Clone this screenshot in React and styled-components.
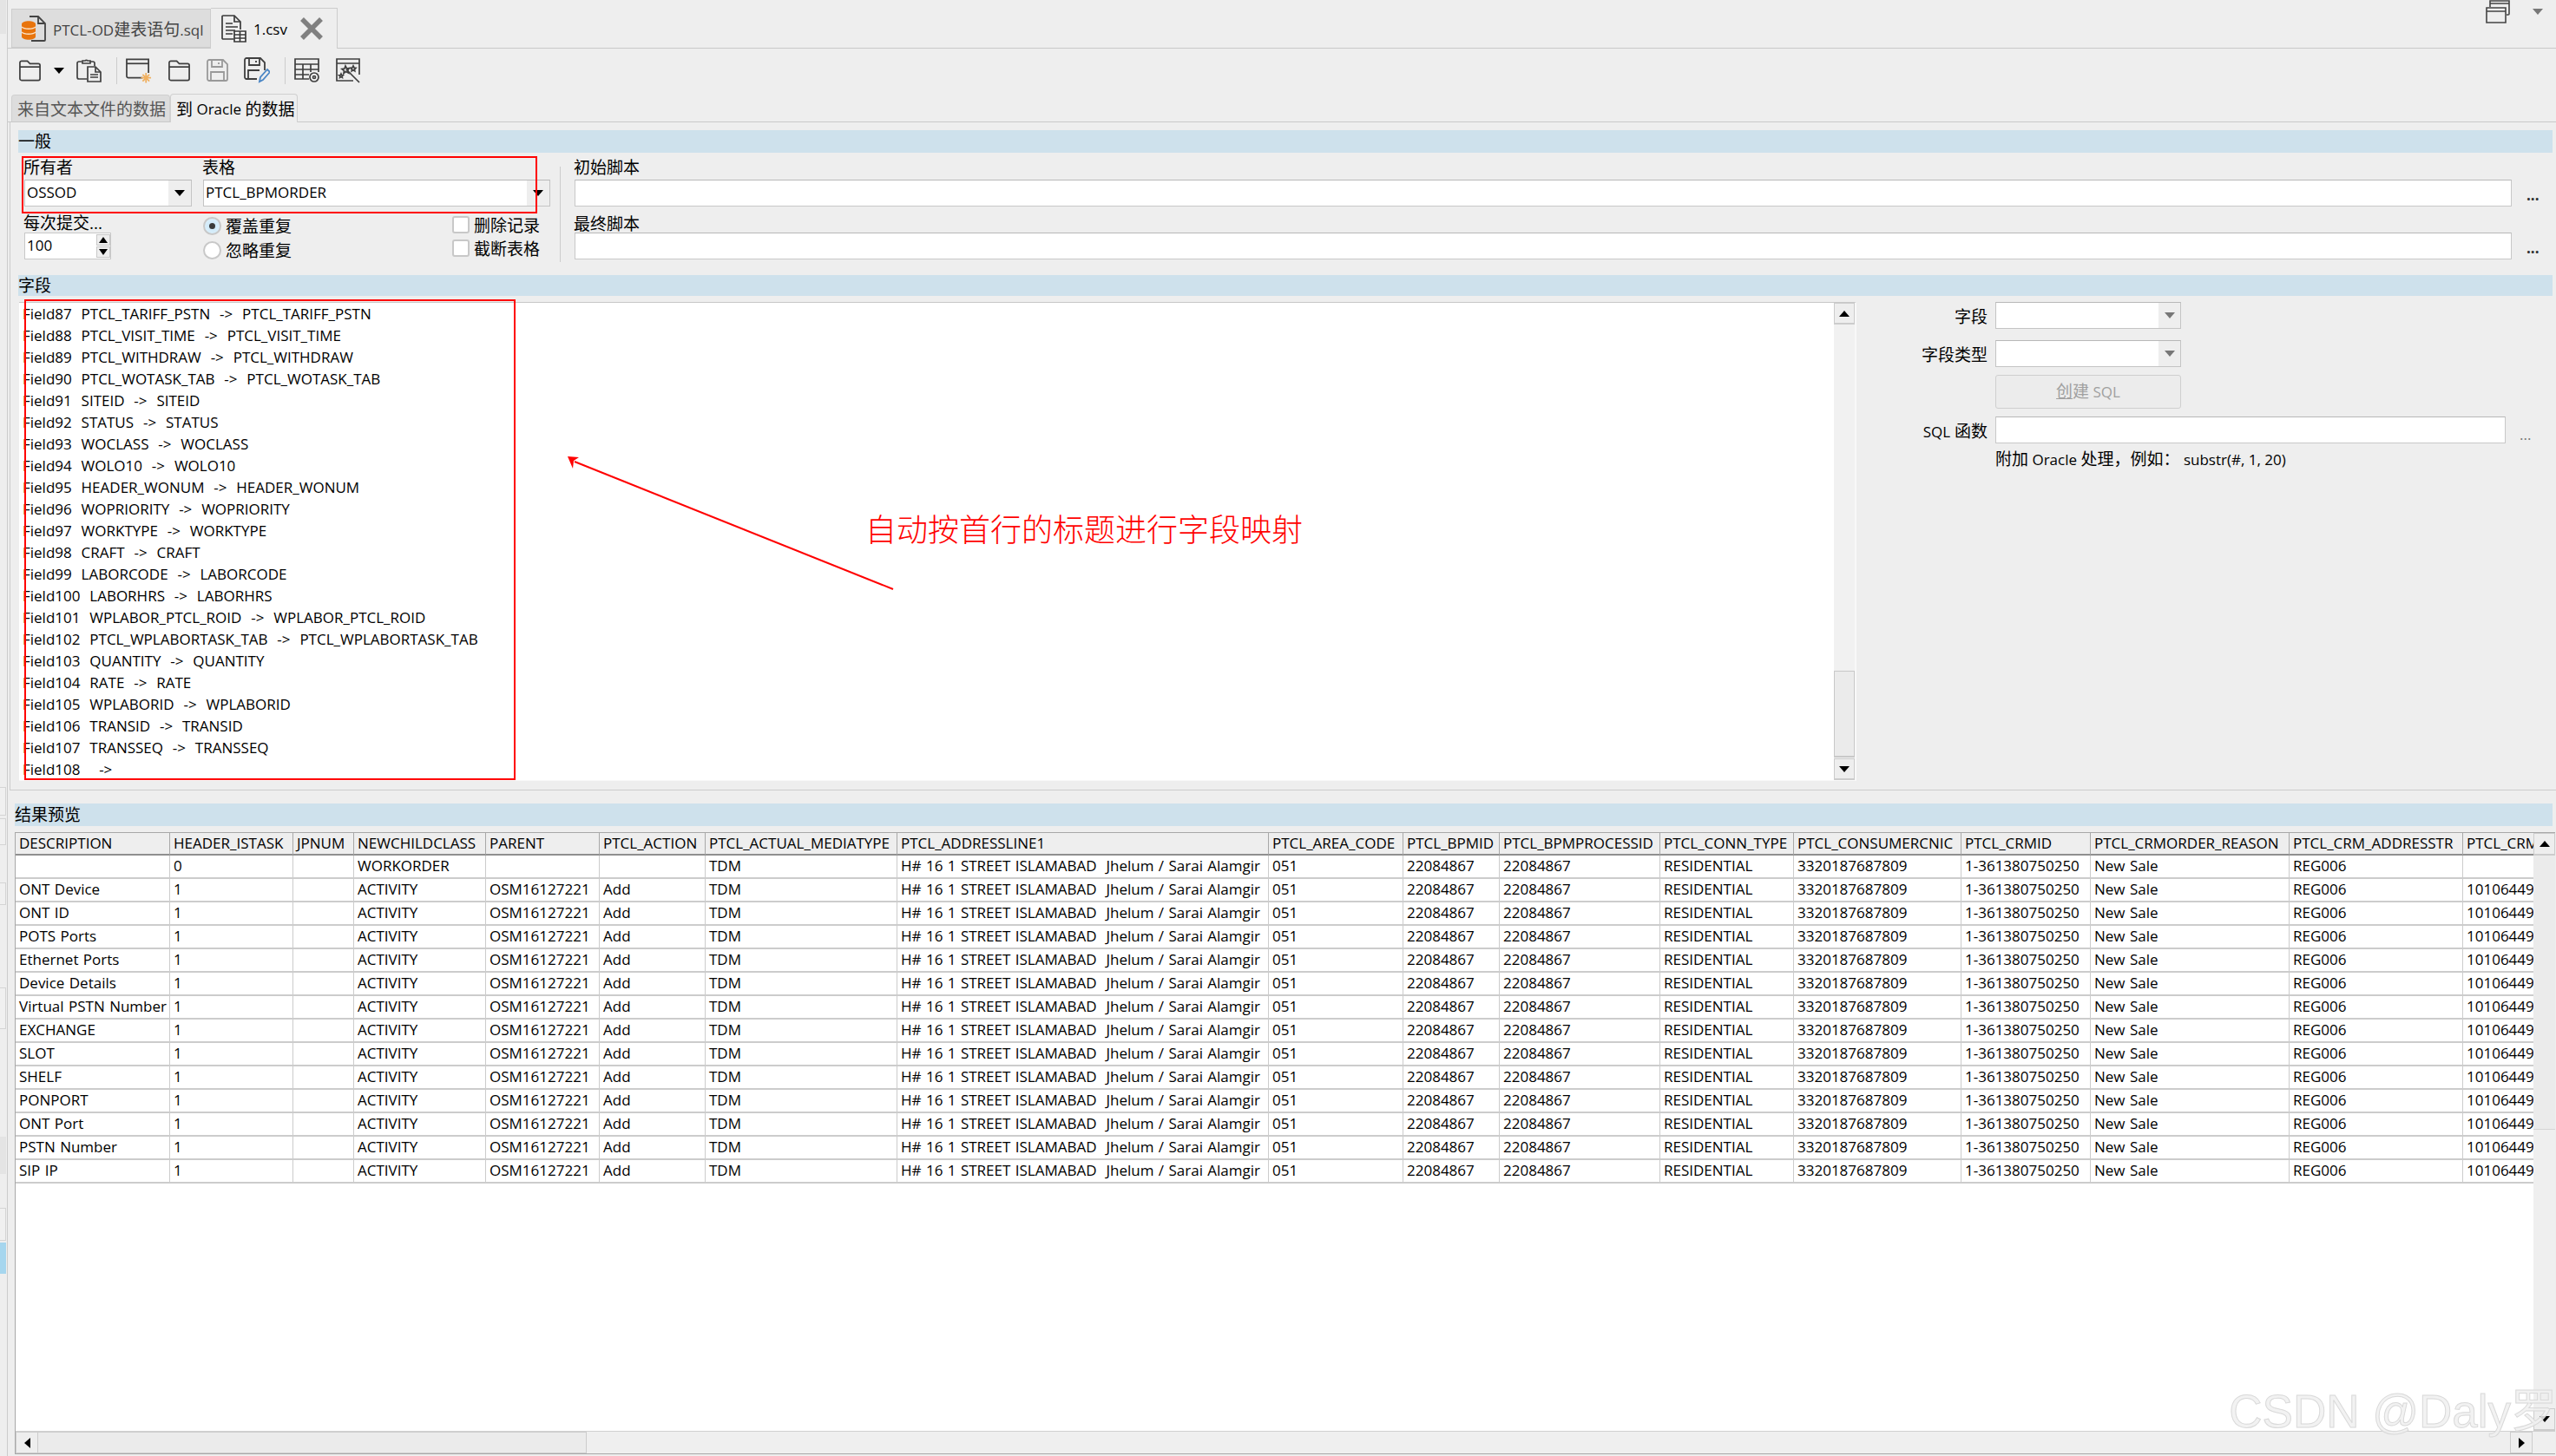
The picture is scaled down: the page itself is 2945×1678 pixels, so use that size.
import React from "react";
import styled, { createGlobalStyle } from "styled-components";

const COLUMNS = [
  ["DESCRIPTION", 178],
  ["HEADER_ISTASK", 142],
  ["JPNUM", 70],
  ["NEWCHILDCLASS", 152],
  ["PARENT", 131],
  ["PTCL_ACTION", 122],
  ["PTCL_ACTUAL_MEDIATYPE", 221],
  ["PTCL_ADDRESSLINE1", 428],
  ["PTCL_AREA_CODE", 155],
  ["PTCL_BPMID", 111],
  ["PTCL_BPMPROCESSID", 185],
  ["PTCL_CONN_TYPE", 154],
  ["PTCL_CONSUMERCNIC", 193],
  ["PTCL_CRMID", 149],
  ["PTCL_CRMORDER_REASON", 229],
  ["PTCL_CRM_ADDRESSTR", 200],
  ["PTCL_CRMORDER_ID", 200],
];

const NAMES = [
  "ONT Device",
  "ONT ID",
  "POTS Ports",
  "Ethernet Ports",
  "Device Details",
  "Virtual PSTN Number",
  "EXCHANGE",
  "SLOT",
  "SHELF",
  "PONPORT",
  "ONT Port",
  "PSTN Number",
  "SIP IP",
];

const commonCells = [
  "TDM",
  "H# 16 1 STREET ISLAMABAD  Jhelum / Sarai Alamgir",
  "051",
  "22084867",
  "22084867",
  "RESIDENTIAL",
  "3320187687809",
  "1-361380750250",
  "New Sale",
  "REG006",
];

const ROWS = [
  ["", "0", "", "WORKORDER", "", "", ...commonCells, ""],
  ...NAMES.map((name) => [
    name,
    "1",
    "",
    "ACTIVITY",
    "OSM16127221",
    "Add",
    ...commonCells,
    "10106449",
  ]),
];

const FIELDS = [
  ["87", "PTCL_TARIFF_PSTN"],
  ["88", "PTCL_VISIT_TIME"],
  ["89", "PTCL_WITHDRAW"],
  ["90", "PTCL_WOTASK_TAB"],
  ["91", "SITEID"],
  ["92", "STATUS"],
  ["93", "WOCLASS"],
  ["94", "WOLO10"],
  ["95", "HEADER_WONUM"],
  ["96", "WOPRIORITY"],
  ["97", "WORKTYPE"],
  ["98", "CRAFT"],
  ["99", "LABORCODE"],
  ["100", "LABORHRS"],
  ["101", "WPLABOR_PTCL_ROID"],
  ["102", "PTCL_WPLABORTASK_TAB"],
  ["103", "QUANTITY"],
  ["104", "RATE"],
  ["105", "WPLABORID"],
  ["106", "TRANSID"],
  ["107", "TRANSSEQ"],
  ["108", ""],
];

const SIDE_SLOTS = [
  { top: 0, height: 39, kind: "plain" },
  { top: 868, height: 33, kind: "outline" },
  { top: 3, height: 31, kind: "outline" },
  { top: 43, height: 26, kind: "outline" },
  { top: 95, height: 48, kind: "outline" },
  { top: 124, height: 43, kind: "plain" },
  { top: 39, height: 38, kind: "outline" },
  { top: 2, height: 36, kind: "active" },
];

const FolderIcon = () => (
  <svg width="27" height="26" viewBox="0 0 28 26" fill="none" stroke="#3f3f3f" strokeWidth="1.8">
    <path d="M2 23V4a2 2 0 0 1 2-2h7l3 3h10a2 2 0 0 1 2 2v16a2 2 0 0 1-2 2H4a2 2 0 0 1-2-2z" />
    <path d="M2 9h24" />
  </svg>
);

const ClipboardIcon = () => (
  <svg width="29" height="28" viewBox="0 0 29 28" fill="none" stroke="#3f3f3f" strokeWidth="1.7">
    <path d="M12 24H3a2 2 0 0 1-2-2V6a2 2 0 0 1 2-2h3" />
    <path d="M16 4h3a2 2 0 0 1 2 2v3" />
    <path d="M7 6V3h3a2 2 0 0 1 3 0h3v3z" />
    <path d="M13 10h9l6 6v11H13z" />
    <path d="M22 10v6h6M16 19h9M16 22h9" />
  </svg>
);

const NewWindowIcon = () => (
  <svg width="30" height="30" viewBox="0 0 31 30" fill="none">
    <path d="M20 24H3a2 2 0 0 1-2-2V2h26v16" stroke="#3f3f3f" strokeWidth="1.8" />
    <path d="M1 7h26" stroke="#3f3f3f" strokeWidth="1.8" />
    <path d="M24 18v12M18 24h12M20 20l8 8M28 20l-8 8" stroke="#f0b060" strokeWidth="1.8" />
  </svg>
);

const SaveIcon = ({ color = "#3f3f3f" }) => (
  <svg width="25" height="26" viewBox="0 0 25 26" fill="none" stroke={color} strokeWidth="1.8">
    <path d="M1 3a2 2 0 0 1 2-2h16l5 5v17a2 2 0 0 1-2 2H3a2 2 0 0 1-2-2z" />
    <path d="M6 1v8h12V1M14 4v2M5 25V15h15v10" />
  </svg>
);

const SaveAsIcon = () => (
  <svg width="30" height="30" viewBox="0 0 30 30" fill="none">
    <path
      d="M15 25H3a2 2 0 0 1-2-2V3a2 2 0 0 1 2-2h16l5 5v9"
      stroke="#3f3f3f"
      strokeWidth="1.8"
    />
    <path d="M6 1v8h12V1M14 4v2M5 25V15h13" stroke="#3f3f3f" strokeWidth="1.8" />
    <path d="M18 28l1-5 8-9 3 3-8 9z" stroke="#4a86c5" strokeWidth="1.8" />
  </svg>
);

const TableGearIcon = () => (
  <svg width="30" height="28" viewBox="0 0 30 28" fill="none" stroke="#3f3f3f" strokeWidth="1.7">
    <path d="M17 24H1V1h27v15" />
    <path d="M1 7h27M1 13h27M1 19h16M10 7v17M19 7v9" />
    <circle cx="23" cy="22" r="5" />
    <circle cx="23" cy="22" r="1.5" />
  </svg>
);

const WizardIcon = () => (
  <svg width="28" height="29" viewBox="0 0 28 29" fill="none" stroke="#3f3f3f" strokeWidth="1.7">
    <path d="M20 26H1V1h26v18" />
    <path d="M1 6h26M12 13l15 15" />
    <path d="M11 9l1.5 3 3-.5-2 2.5 1 3-3-1.5-2.5 2 .5-3-2.5-2 3-.5zM20 9l1 2 2 .3-1.5 1.5.3 2-1.8-1-1.8 1 .3-2L17 11.300l2-.3zM6 18l.7 1.500 1.600.2-1.200 1.100.3 1.600L6 21.600l-1.400.8.3-1.600-1.200-1.100 1.600-.2z" />
  </svg>
);

const SqlFileIcon = () => (
  <svg width="29" height="30" viewBox="0 0 29 30" fill="none">
    <path d="M10 1h10l8 8v19a1 1 0 0 1-1 1H12" stroke="#444" strokeWidth="1.8" />
    <path d="M20 1v8h8" stroke="#444" strokeWidth="1.8" />
    <path d="M1 10c0-5 16-5 16 0v14c0 5-16 5-16 0z" fill="#e8740c" />
    <path d="M1 13c3 3 13 3 16 0M1 19c3 3 13 3 16 0" stroke="#fbe3c8" strokeWidth="1.500" />
  </svg>
);

const CsvFileIcon = () => (
  <svg width="29" height="32" viewBox="0 0 29 32" fill="none" stroke="#3a3a3a" strokeWidth="1.7">
    <path d="M14 28H2a1 1 0 0 1-1-1V2a1 1 0 0 1 1-1h13l7 7v9" />
    <path d="M15 1v7h7M5 10h8M5 14h14M5 18h11M5 22h8" />
    <path d="M15 19h13v12H15zM15 23h13M15 27h13M21.500 19v12" fill="#fff" />
  </svg>
);

const CloseIcon = () => (
  <svg width="26" height="26" viewBox="0 0 26 26" stroke="#808080" strokeWidth="5.500">
    <path d="M2 2l22 22M24 2L2 24" />
  </svg>
);

const WindowsIcon = () => (
  <svg width="28" height="27" viewBox="0 0 28 27" fill="none" stroke="#444" strokeWidth="1.6">
    <path d="M5 8V1h22v15a1 1 0 0 1-1 1h-2M5 4h22" />
    <path d="M1 9h22v17H1zM1 13h22" fill="#eee" />
  </svg>
);

const PointerArrow = () => (
  <ArrowLayer width="380" height="160" viewBox="0 0 380 160">
    <line x1="375" y1="153" x2="8" y2="6" stroke="#ff0000" strokeWidth="2" />
    <path d="M0 0l13 1-6 4-1 9z" fill="#ff0000" />
  </ArrowLayer>
);

const App = () => {
  return (
    <>
      <GlobalStyle />
      <Screen>
        <Sidebar>
          {SIDE_SLOTS.map((slot, i) => (
            <SideSlot key={i} $top={slot.top} $height={slot.height} $kind={slot.kind} />
          ))}
        </Sidebar>
        <Main>
          <FileTabBar>
            <FileTab>
              <SqlFileIcon />
              <span>
                PTCL-OD<Han>建表语句</Han>.sql
              </span>
            </FileTab>
            <FileTab $active>
              <CsvFileIcon />
              <span>1.csv</span>
              <CloseIcon />
            </FileTab>
            <WindowTools>
              <WindowsIcon />
              <Caret $color="#777" />
            </WindowTools>
          </FileTabBar>

          <Toolbar>
            <FolderIcon />
            <ToolCaret>
              <Caret />
            </ToolCaret>
            <ClipboardIcon />
            <ToolSeparator />
            <ToolGroup>
              <NewWindowIcon />
              <FolderIcon />
              <SaveIcon color="#999" />
              <SaveAsIcon />
            </ToolGroup>
            <ToolSeparator />
            <ToolGroup>
              <TableGearIcon />
              <WizardIcon />
            </ToolGroup>
          </Toolbar>

          <SubTabBar>
            <SubTab>来自文本文件的数据</SubTab>
            <SubTab $active>
              <Han>到</Han> Oracle <Han>的数据</Han>
            </SubTab>
          </SubTabBar>

          <Pane>
            <SectionBar>一般</SectionBar>
            <GeneralBody>
              <GeneralLeft>
                <OwnerRow>
                  <FieldColumn $width={193}>
                    <Label>所有者</Label>
                    <Combo>
                      <ComboText>OSSOD</ComboText>
                      <ComboButton>
                        <Caret />
                      </ComboButton>
                    </Combo>
                  </FieldColumn>
                  <FieldColumn $width={400}>
                    <Label>表格</Label>
                    <Combo>
                      <ComboText>PTCL_BPMORDER</ComboText>
                      <ComboButton>
                        <Caret />
                      </ComboButton>
                    </Combo>
                  </FieldColumn>
                </OwnerRow>
                <OptionsRow>
                  <FieldColumn $width={206}>
                    <Label $short>每次提交...</Label>
                    <SpinBox>
                      <SpinText>100</SpinText>
                      <SpinButtons>
                        <SpinButton>
                          <Caret $up $small />
                        </SpinButton>
                        <SpinButton>
                          <Caret $small />
                        </SpinButton>
                      </SpinButtons>
                    </SpinBox>
                  </FieldColumn>
                  <RadioColumn>
                    <Choice>
                      <Radio $checked />
                      覆盖重复
                    </Choice>
                    <Choice>
                      <Radio />
                      忽略重复
                    </Choice>
                  </RadioColumn>
                  <CheckColumn>
                    <Choice>
                      <CheckBox />
                      删除记录
                    </Choice>
                    <Choice>
                      <CheckBox />
                      截断表格
                    </Choice>
                  </CheckColumn>
                </OptionsRow>
              </GeneralLeft>
              <VerticalRule />
              <Scripts>
                <Label>初始脚本</Label>
                <ScriptRow>
                  <TextBox />
                  <Dots>...</Dots>
                </ScriptRow>
                <ScriptLabel>最终脚本</ScriptLabel>
                <ScriptRow>
                  <TextBox />
                  <Dots>...</Dots>
                </ScriptRow>
              </Scripts>
            </GeneralBody>

            <SectionBar $height={24}>字段</SectionBar>
            <FieldsBody>
              <FieldList>
                <FieldRows>
                  {FIELDS.map(([num, name]) => (
                    <FieldRow key={num}>{`Field${num}  ${name}  ->  ${name}`}</FieldRow>
                  ))}
                </FieldRows>
                <ListScroll>
                  <ScrollButton>
                    <Caret $up />
                  </ScrollButton>
                  <ScrollSpacer />
                  <ListThumb />
                  <ScrollButton>
                    <Caret />
                  </ScrollButton>
                </ListScroll>
              </FieldList>
              <FieldForm>
                <FormRow $gap={13}>
                  <FormLabel>字段</FormLabel>
                  <FormCombo>
                    <ComboText />
                    <ComboButton $narrow>
                      <Caret $color="#777" />
                    </ComboButton>
                  </FormCombo>
                </FormRow>
                <FormRow $gap={9}>
                  <FormLabel>字段类型</FormLabel>
                  <FormCombo>
                    <ComboText />
                    <ComboButton $narrow>
                      <Caret $color="#777" />
                    </ComboButton>
                  </FormCombo>
                </FormRow>
                <FormRow $gap={9}>
                  <FormLabel />
                  <CreateButton>
                    <u>
                      <Han>创</Han>
                    </u>
                    <Han>建</Han> SQL
                  </CreateButton>
                </FormRow>
                <FormRow $gap={4}>
                  <FormLabel>
                    <small>SQL</small> 函数
                  </FormLabel>
                  <FunctionBox />
                  <FunctionDots>...</FunctionDots>
                </FormRow>
                <Hint>
                  <Han>附加</Han> Oracle <Han>处理，例如：</Han> substr(#, 1, 20)
                </Hint>
              </FieldForm>
            </FieldsBody>
          </Pane>

          <PreviewBar>结果预览</PreviewBar>
          <TablePanel>
            <TableArea>
              <TableView>
                <Grid>
                  <colgroup>
                    {COLUMNS.map(([name, width]) => (
                      <col key={name} width={width} />
                    ))}
                  </colgroup>
                  <thead>
                    <tr>
                      {COLUMNS.map(([name]) => (
                        <HeadCell key={name}>{name}</HeadCell>
                      ))}
                    </tr>
                  </thead>
                  <tbody>
                    {ROWS.map((row, i) => (
                      <tr key={i}>
                        {row.map((cell, j) => (
                          <Cell key={j}>{cell}</Cell>
                        ))}
                      </tr>
                    ))}
                  </tbody>
                </Grid>
              </TableView>
              <TableScroll>
                <ScrollButton $tall>
                  <Caret $up />
                </ScrollButton>
                <TableThumb />
                <ScrollSpacer />
                <ScrollButton $tall>
                  <Caret />
                </ScrollButton>
              </TableScroll>
            </TableArea>
            <BottomScroll>
              <SideButton>
                <SideCaret $left />
              </SideButton>
              <BottomThumb />
              <ScrollSpacer />
              <SideButton>
                <SideCaret />
              </SideButton>
              <ScrollCorner />
            </BottomScroll>
          </TablePanel>
        </Main>

        <OwnerHighlight />
        <FieldHighlight />
        <PointerArrow />
        <NoteText>自动按首行的标题进行字段映射</NoteText>
        <Watermark>CSDN @Daly罗</Watermark>
      </Screen>
    </>
  );
};

const GlobalStyle = createGlobalStyle`
  html, body {
    margin: 0;
    padding: 0;
    background: #eeeeee;
    overflow: hidden;
  }
  * {
    box-sizing: border-box;
  }
`;

const Screen = styled.div`
  position: relative;
  display: flex;
  width: 2945px;
  height: 1678px;
  overflow: hidden;
  background: #eeeeee;
  color: #000;
  font-family: "Open Sans", "Noto Sans CJK SC", sans-serif;
  font-size: 17px;
`;

const Sidebar = styled.div`
  display: flex;
  flex-direction: column;
  flex: 0 0 9px;
  border-right: 1px solid #cccccc;
`;

const SideSlot = styled.div`
  flex: none;
  width: 7px;
  margin-top: ${(props) => props.$top}px;
  height: ${(props) => props.$height}px;
  background: ${(props) =>
    props.$kind === "active" ? "#a6d6ee" : props.$kind === "plain" ? "#e4e4e4" : "#f0f0f0"};
  border: ${(props) => (props.$kind === "outline" ? "1px solid #d4d4d4" : "none")};
  border-left: none;
`;

const Main = styled.div`
  display: flex;
  flex-direction: column;
  flex: 1;
  min-width: 0;
`;

const Han = styled.span`
  font-size: 19px;
`;

const FileTabBar = styled.div`
  display: flex;
  align-items: flex-end;
  height: 56px;
  padding-left: 4px;
  border-bottom: 1px solid #c9c9c9;
`;

const FileTab = styled.div`
  display: flex;
  align-items: center;
  height: ${(props) => (props.$active ? "47px" : "45px")};
  margin-bottom: ${(props) => (props.$active ? "-1px" : "0")};
  width: ${(props) => (props.$active ? "146px" : "230px")};
  padding-left: ${(props) => (props.$active ? "12px" : "10px")};
  gap: 8px;
  background: ${(props) => (props.$active ? "#eeeeee" : "#dddddd")};
  border: 1px solid #cdcdcd;
  border-bottom: ${(props) => (props.$active ? "none" : "1px solid #cdcdcd")};
  border-left: ${(props) => (props.$active ? "none" : "1px solid #cdcdcd")};
  color: ${(props) => (props.$active ? "#000" : "#444")};

  svg:last-child:not(:first-child) {
    margin-left: 7px;
  }
`;

const WindowTools = styled.div`
  display: flex;
  align-items: center;
  gap: 26px;
  align-self: flex-start;
  margin-left: auto;
  padding-right: 15px;
`;

const Toolbar = styled.div`
  display: flex;
  align-items: center;
  height: 52px;
  padding: 0 0 2px 12px;
`;

const ToolCaret = styled.div`
  display: flex;
  margin: 0 14px 0 14px;
`;

const ToolGroup = styled.div`
  display: flex;
  align-items: center;
  gap: 18px;
`;

const ToolSeparator = styled.div`
  width: 1px;
  height: 31px;
  margin: 0 10px 0 17px;
  background: #cccccc;
`;

const Caret = styled.i`
  display: block;
  flex: none;
  width: 0;
  height: 0;
  border-left: ${(props) => (props.$small ? 5 : 6)}px solid transparent;
  border-right: ${(props) => (props.$small ? 5 : 6)}px solid transparent;
  border-top: ${(props) => (props.$up ? "none" : `7px solid ${props.$color || "#000"}`)};
  border-bottom: ${(props) => (props.$up ? `7px solid ${props.$color || "#000"}` : "none")};
`;

const SideCaret = styled.i`
  display: block;
  width: 0;
  height: 0;
  border-top: 6px solid transparent;
  border-bottom: 6px solid transparent;
  border-left: ${(props) => (props.$left ? "none" : "7px solid #000")};
  border-right: ${(props) => (props.$left ? "7px solid #000" : "none")};
`;

const SubTabBar = styled.div`
  display: flex;
  align-items: flex-end;
  height: 33px;
  padding-left: 4px;
  border-bottom: 1px solid #c9c9c9;
`;

const SubTab = styled.div`
  display: flex;
  align-items: center;
  white-space: pre;
  height: ${(props) => (props.$active ? "33px" : "31px")};
  margin-bottom: ${(props) => (props.$active ? "-1px" : "0")};
  width: ${(props) => (props.$active ? "147px" : "183px")};
  padding-left: 6px;
  background: ${(props) => (props.$active ? "#eeeeee" : "#dddddd")};
  border: 1px solid #d0d0d0;
  border-bottom: none;
  border-radius: 4px 4px 0 0;
  color: ${(props) => (props.$active ? "#000" : "#555")};
  font-size: ${(props) => (props.$active ? "17px" : "19px")};
`;

const Pane = styled.div`
  display: flex;
  flex-direction: column;
  flex: none;
  height: 770px;
  margin-left: 2px;
  padding: 9px 4px 0 9px;
  border-left: 1px solid #cccccc;
  border-bottom: 1px solid #cccccc;
`;

const SectionBar = styled.div`
  flex: none;
  height: ${(props) => props.$height || 26}px;
  line-height: ${(props) => props.$height || 26}px;
  background: #cee1ec;
  font-size: 19px;
`;

const GeneralBody = styled.div`
  display: flex;
  flex: none;
  height: 141px;
`;

const GeneralLeft = styled.div`
  flex: 0 0 624px;
  padding: 5px 0 0 7px;
`;

const OwnerRow = styled.div`
  display: flex;
  gap: 13px;
`;

const FieldColumn = styled.div`
  flex: 0 0 ${(props) => props.$width}px;
  width: ${(props) => props.$width}px;
`;

const Label = styled.div`
  height: ${(props) => (props.$short ? "21px" : "26px")};
  line-height: ${(props) => (props.$short ? "21px" : "24px")};
  margin-left: -1px;
  font-size: 19px;
  white-space: nowrap;
`;

const Combo = styled.div`
  display: flex;
  height: 31px;
  background: #ffffff;
  border: 1px solid #c4c4c4;
  border-top-color: #b8b8b8;
`;

const FormCombo = styled(Combo)`
  flex: 0 0 214px;
`;

const ComboText = styled.div`
  flex: 1;
  padding-left: 2px;
  line-height: 28px;
  background: #ffffff;
`;

const ComboButton = styled.div`
  display: flex;
  align-items: center;
  justify-content: center;
  flex: 0 0 ${(props) => (props.$narrow ? "25px" : "26px")};
  background: #eeeeee;
`;

const OptionsRow = styled.div`
  display: flex;
  margin-top: 9px;
`;

const SpinBox = styled.div`
  display: flex;
  width: 100px;
  height: 31px;
  background: #ffffff;
  border: 1px solid #c8c8c8;
`;

const SpinText = styled.div`
  flex: 1;
  padding-left: 2px;
  line-height: 28px;
`;

const SpinButtons = styled.div`
  display: flex;
  flex-direction: column;
  justify-content: space-between;
  flex: 0 0 16px;
  padding: 1px 0;
`;

const SpinButton = styled.div`
  display: flex;
  align-items: center;
  justify-content: center;
  height: 13px;
  background: #eeeeee;
  border: 1px solid #c8c8c8;
`;

const RadioColumn = styled.div`
  display: flex;
  flex-direction: column;
  flex: 0 0 287px;
  gap: 8px;
  padding-top: 3px;
`;

const CheckColumn = styled.div`
  display: flex;
  flex-direction: column;
  gap: 7px;
  padding-top: 2px;
`;

const Choice = styled.div`
  display: flex;
  align-items: center;
  gap: 5px;
  height: 20px;
  font-size: 19px;
  white-space: nowrap;
`;

const Radio = styled.div`
  display: flex;
  align-items: center;
  justify-content: center;
  flex: 0 0 21px;
  height: 21px;
  border-radius: 50%;
  border: 2px solid #c8c8c8;
  background: ${(props) =>
    props.$checked ? "radial-gradient(circle, #c8e6f8 0%, #d9eefa 70%, #ffffff 100%)" : "#ffffff"};

  &::after {
    content: "";
    display: ${(props) => (props.$checked ? "block" : "none")};
    width: 7px;
    height: 7px;
    border-radius: 50%;
    background: #3a3a3a;
  }
`;

const CheckBox = styled.div`
  flex: 0 0 20px;
  height: 20px;
  background: #ffffff;
  border: 2px solid #c8c8c8;
  border-radius: 3px;
`;

const VerticalRule = styled.div`
  flex: 0 0 1px;
  height: 110px;
  margin-top: 16px;
  background: #cccccc;
`;

const Scripts = styled.div`
  flex: 1;
  min-width: 0;
  padding: 5px 0 0 16px;
`;

const ScriptLabel = styled(Label)`
  height: 30px;
  line-height: 28px;
  padding-top: 6px;
`;

const ScriptRow = styled.div`
  display: flex;
  align-items: flex-end;
`;

const TextBox = styled.div`
  flex: 1;
  height: 31px;
  background: #ffffff;
  border: 1px solid #c8c8c8;
  border-top-color: #b8b8b8;
`;

const Dots = styled.div`
  flex: 0 0 47px;
  padding: 0 0 3px 17px;
  line-height: 20px;
  font-weight: 700;
  color: #333;
`;

const FieldsBody = styled.div`
  display: flex;
  flex: 1;
  min-height: 0;
  padding-top: 7px;
`;

const FieldList = styled.div`
  display: flex;
  flex: 0 0 2117px;
  height: 552px;
  margin-left: 1px;
  background: #ffffff;
  border-top: 1px solid #c8c8c8;
  border-right: 2px solid #f8f8f8;
  border-bottom: 1px solid #f8f8f8;
`;

const FieldRows = styled.div`
  flex: 1;
  padding-left: 4px;
  overflow: hidden;
`;

const FieldRow = styled.div`
  height: 25px;
  line-height: 25px;
  white-space: pre;
  word-spacing: 1px;
`;

const ListScroll = styled.div`
  display: flex;
  flex-direction: column;
  flex: 0 0 24px;
  background: #f1f1f1;
`;

const ScrollButton = styled.div`
  display: flex;
  align-items: center;
  justify-content: center;
  flex: none;
  height: ${(props) => (props.$tall ? "26px" : "25px")};
  background: #eeeeee;
  border: 1px solid #cccccc;
  border-bottom-width: 2px;
`;

const ScrollSpacer = styled.div`
  flex: 1;
`;

const ListThumb = styled.div`
  flex: none;
  height: 100px;
  margin-bottom: 1px;
  background: #ebebeb;
  border: 1px solid #c8c8c8;
  border-bottom-width: 2px;
`;

const FieldForm = styled.div`
  display: flex;
  flex-direction: column;
  flex: 1;
  min-width: 0;
`;

const FormRow = styled.div`
  display: flex;
  align-items: center;
  margin-bottom: ${(props) => props.$gap}px;
  flex: none;
`;

const FormLabel = styled.div`
  flex: 0 0 151px;
  margin-right: 9px;
  text-align: right;
  font-size: 19px;
  white-space: nowrap;

  small {
    font-size: 17px;
  }
`;

const CreateButton = styled.div`
  flex: 0 0 214px;
  height: 39px;
  line-height: 37px;
  text-align: center;
  color: #a0a0a0;
  background: #ececec;
  border: 1px solid #cfcfcf;
  border-radius: 3px;
`;

const FunctionBox = styled(TextBox)`
  flex: 0 0 588px;
`;

const FunctionDots = styled.div`
  align-self: flex-end;
  margin-left: 16px;
  line-height: 20px;
  color: #777;
`;

const Hint = styled.div`
  margin-left: 160px;
  line-height: 28px;
  white-space: nowrap;
`;

const PreviewBar = styled.div`
  flex: none;
  height: 26px;
  line-height: 26px;
  margin: 15px 4px 7px 8px;
  background: #cee1ec;
  font-size: 19px;
`;

const TablePanel = styled.div`
  display: flex;
  flex-direction: column;
  flex: none;
  height: 717px;
  margin: 0 1px 0 8px;
  background: #ffffff;
  border: 1px solid #a8a8a8;
  border-right: none;
`;

const TableArea = styled.div`
  display: flex;
  flex: 1;
  min-height: 0;
`;

const TableView = styled.div`
  flex: 1;
  min-width: 0;
  overflow: hidden;
`;

const Grid = styled.table`
  table-layout: fixed;
  width: 2921px;
  border-spacing: 0;
  border-collapse: separate;
`;

const HeadCell = styled.th`
  height: 26px;
  padding: 0 4px 1px;
  background: #eeeeee;
  border-right: 1px solid #a8a8a8;
  border-bottom: 2px solid #8f8f8f;
  font-weight: 400;
  text-align: left;
  white-space: pre;
  overflow: hidden;
`;

const Cell = styled.td`
  height: 27px;
  padding: 0 4px 2px;
  border-right: 1px solid #cccccc;
  border-bottom: 2px solid #cccccc;
  white-space: pre;
  word-spacing: 1px;
  overflow: hidden;
`;

const TableScroll = styled.div`
  display: flex;
  flex-direction: column;
  flex: 0 0 25px;
  background: #efefef;
`;

const TableThumb = styled.div`
  flex: none;
  height: 316px;
  background: #ebebeb;
  border-bottom: 1px solid #d4d4d4;
`;

const BottomScroll = styled.div`
  display: flex;
  flex: 0 0 26px;
  background: #efefef;
  border-top: 1px solid #d0d0d0;
`;

const SideButton = styled.div`
  display: flex;
  align-items: center;
  justify-content: center;
  flex: 0 0 26px;
  background: #eeeeee;
  border: 1px solid #cccccc;
`;

const BottomThumb = styled.div`
  flex: 0 0 632px;
  background: #ebebeb;
  border-top: 1px solid #cccccc;
  border-right: 1px solid #cccccc;
  border-bottom: 1px solid #cccccc;
`;

const ScrollCorner = styled.div`
  flex: 0 0 26px;
`;

const OwnerHighlight = styled.div`
  position: absolute;
  left: 25px;
  top: 180px;
  width: 594px;
  height: 66px;
  border: 2px solid #ff0000;
`;

const FieldHighlight = styled.div`
  position: absolute;
  left: 28px;
  top: 345px;
  width: 566px;
  height: 554px;
  border: 2px solid #ff0000;
`;

const ArrowLayer = styled.svg`
  position: absolute;
  left: 654px;
  top: 526px;
`;

const NoteText = styled.div`
  position: absolute;
  left: 997px;
  top: 588px;
  font-size: 36px;
  line-height: 46px;
  font-weight: 300;
  color: #ff0000;
  white-space: nowrap;
`;

const Watermark = styled.div`
  position: absolute;
  right: -1px;
  top: 1594px;
  font-family: "Liberation Sans", "Noto Sans CJK SC", sans-serif;
  font-size: 53px;
  line-height: 66px;
  white-space: nowrap;
  color: rgba(240, 240, 240, 0.85);
  -webkit-text-stroke: 1px #d9d9d9;
`;

export default App;
